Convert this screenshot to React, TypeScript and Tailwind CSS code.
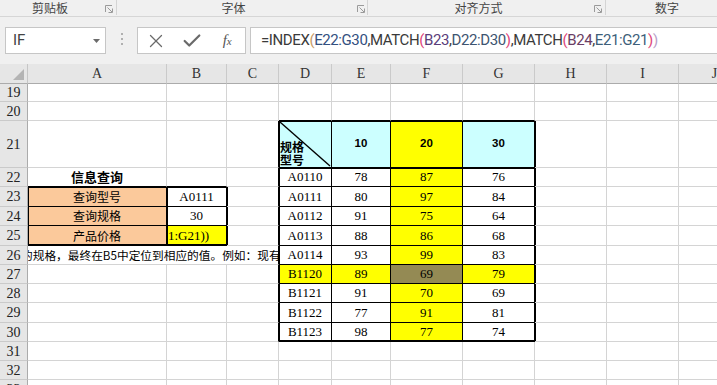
import React from 'react';
import { X, Check } from 'lucide-react';

const ROW_IDS = [19, 20, 21, 22, 23, 24, 25, 26, 27, 28, 29, 30, 31, 32, 33];
const COL_LETTERS = ['', 'A', 'B', 'C', 'D', 'E', 'F', 'G', 'H', 'I', 'J'];

const SH: Record<string, string> = {
  '': '',
  L: 'shadow-[inset_1px_0_0_#000]',
  T: 'shadow-[inset_0_1px_0_#000]',
  LT: 'shadow-[inset_1px_1px_0_#000]',
  B: 'shadow-[inset_0_-1px_0_#000]',
  LB: 'shadow-[inset_1px_-1px_0_#000]',
  TB: 'shadow-[inset_0_1px_0_#000,inset_0_-1px_0_#000]',
  LTB: 'shadow-[inset_1px_1px_0_#000,inset_0_-1px_0_#000]',
};

const RIGHT: Record<number, string[]> = {
  22: ['A0110', '78', '87', '76'],
  23: ['A0111', '80', '97', '84'],
  24: ['A0112', '91', '75', '64'],
  25: ['A0113', '88', '86', '68'],
  26: ['A0114', '93', '99', '83'],
  27: ['B1120', '89', '69', '79'],
  28: ['B1121', '91', '70', '69'],
  29: ['B1122', '77', '91', '81'],
  30: ['B1123', '98', '77', '74'],
};

const inRight = (r: number, c: number) => r >= 21 && r <= 30 && c >= 4 && c <= 7;
const inLeft = (r: number, c: number) => r >= 23 && r <= 25 && c >= 1 && c <= 2;

function thickL(r: number, c: number) {
  if ((c === 4 || c === 8) && r >= 21 && r <= 30) return true;
  if (c >= 1 && c <= 3 && r >= 23 && r <= 25) return true;
  return false;
}
function thickT(r: number, c: number) {
  if ((r === 21 || r === 22) && c >= 4 && c <= 7) return true;
  if (r === 23 && c >= 1 && c <= 2) return true;
  return false;
}
function thickB(r: number, c: number) {
  if (r === 30 && c >= 4 && c <= 7) return true;
  if (r === 25 && c >= 1 && c <= 2) return true;
  return false;
}
function blackR(r: number, c: number) {
  if (inRight(r, c) || inLeft(r, c)) return true;
  if (c === 3 && r >= 21 && r <= 30) return true;
  return false;
}
function blackB(r: number, c: number) {
  if (inRight(r, c) || inLeft(r, c)) return true;
  if (r === 20 && c >= 4 && c <= 7) return true;
  if (r === 22 && c >= 1 && c <= 2) return true;
  return false;
}

const NUM = "justify-center font-['Liberation_Serif',serif] text-[13px] text-black";
const ZH = "justify-center font-['Noto_Sans_CJK_SC',sans-serif] text-[12px] text-black";

function cellContent(r: number, c: number): { bg: string; cls: string; node: React.ReactNode } {
  let bg = 'bg-white';
  let cls = '';
  let node: React.ReactNode = null;
  if (inRight(r, c)) {
    const ci = c - 4;
    if (r === 21) {
      if (ci === 0) {
        bg = 'bg-[#ccffff]';
        cls = "flex-col !items-start justify-end pl-[1px] pb-[1px] font-['Noto_Sans_CJK_SC',sans-serif] font-bold text-[12px] leading-[13px] text-black";
        node = (
          <>
            <svg className="absolute inset-0" width="100%" height="100%" viewBox="0 0 53 47" preserveAspectRatio="none">
              <line x1="1" y1="1" x2="52" y2="46" stroke="#000" strokeWidth="1.4" />
            </svg>
            <span className="relative">规格</span>
            <span className="relative">型号</span>
          </>
        );
      } else {
        bg = ci === 2 ? 'bg-[#ffff00]' : 'bg-[#ccffff]';
        cls = "justify-center font-['Liberation_Sans',sans-serif] font-bold text-[11.5px] text-black";
        node = ['10', '20', '30'][ci - 1];
      }
    } else {
      node = RIGHT[r][ci];
      cls = NUM;
      if (ci === 2) bg = r === 27 ? 'bg-[#948a54]' : 'bg-[#ffff00]';
      else if (r === 27) bg = 'bg-[#ffff00]';
    }
  } else if (inLeft(r, c)) {
    if (c === 1) {
      bg = 'bg-[#fbc99b]';
      cls = ZH;
      node = ['查询型号', '查询规格', '产品价格'][r - 23];
    } else if (r === 25) {
      bg = 'bg-[#ffff00]';
      cls = "justify-start pl-[1px] font-['Liberation_Serif',serif] text-[13px] text-black";
      node = '1:G21))';
    } else {
      cls = NUM;
      node = r === 23 ? 'A0111' : '30';
    }
  } else if (r === 22 && c === 1) {
    cls = "justify-center font-['Noto_Sans_CJK_SC',sans-serif] font-bold text-[13px] text-black";
    node = '信息查询';
  }
  return { bg, cls, node };
}

function Launcher({ className }: { className?: string }) {
  return (
    <svg className={className} width="8" height="8" viewBox="0 0 8 8">
      <path d="M0.5 7V0.5H7" stroke="#9a9a9a" fill="none" />
      <path d="M2.5 2.5L7 7M7.5 3.5V7.5H3.5" stroke="#9a9a9a" fill="none" />
    </svg>
  );
}

function Ribbon() {
  return (
    <div className="h-[17px] bg-[#f0f0f0] border-b border-[#d6d6d6] flex text-[12px] leading-[15px] text-[#444] font-['Noto_Sans_CJK_SC',sans-serif]">
      <div className="w-[117px] shrink-0 flex items-start">
        <div className="w-[100px] text-center">剪贴板</div>
        <Launcher className="ml-[5px] mt-[5px]" />
        <div className="ml-auto h-[15px] w-px bg-[#d4d4d4]" />
      </div>
      <div className="w-[251px] shrink-0 flex items-start">
        <div className="w-[233px] text-center">字体</div>
        <Launcher className="ml-[7px] mt-[5px]" />
        <div className="ml-auto h-[15px] w-px bg-[#d4d4d4]" />
      </div>
      <div className="w-[238px] shrink-0 flex items-start">
        <div className="w-[221px] text-center">对齐方式</div>
        <Launcher className="ml-[5px] mt-[5px]" />
        <div className="ml-auto h-[15px] w-px bg-[#d4d4d4]" />
      </div>
      <div className="w-[111px] shrink-0 overflow-hidden">
        <div className="w-[122px] text-center">数字</div>
      </div>
    </div>
  );
}

function FormulaBar() {
  const p = 'text-[#e0457b]';
  const o = 'text-[#c89a66]';
  return (
    <div className="h-[47px] bg-[#f0f0f0] flex items-start pt-[10px] pl-[5px]">
      <div className="w-[101px] shrink-0 h-[27px] bg-white border border-[#c6c6c6] flex items-center pl-[7px] pr-[5px]">
        <span className="flex-1 font-['Roboto',sans-serif] text-[15px] text-[#444]">IF</span>
        <svg width="7" height="4" viewBox="0 0 7 4">
          <path d="M0 0H7L3.5 4Z" fill="#6b6b6b" />
        </svg>
      </div>
      <div className="w-[31px] shrink-0 flex flex-col items-center gap-[3px] pt-[6px]">
        <div className="w-[2px] h-[2px] bg-[#b0b0b0]" />
        <div className="w-[2px] h-[2px] bg-[#b0b0b0]" />
        <div className="w-[2px] h-[2px] bg-[#b0b0b0]" />
      </div>
      <div className="w-[109px] shrink-0 h-[27px] bg-white border border-[#c6c6c6] flex items-center">
        <div className="w-[36px] flex justify-center">
          <X size={22} strokeWidth={1.4} color="#6a6a6a" />
        </div>
        <div className="w-[36px] flex justify-center">
          <Check size={22} strokeWidth={2.4} color="#6a6a6a" />
        </div>
        <div className="w-[36px] flex justify-center">
          <span className="italic font-['Liberation_Serif',serif] text-[15px] text-[#555] leading-none">
            f<span className="text-[11px]">x</span>
          </span>
        </div>
      </div>
      <div className="ml-[4px] flex-1 h-[27px] bg-white border border-[#c6c6c6] border-r-0 flex items-center pl-[10px] whitespace-nowrap overflow-hidden">
        <span className="font-['Roboto',sans-serif] text-[15px] tracking-[-0.4px] text-[#3a3a3a]">
          =INDEX<span className={o}>(</span>
          <span className="text-[#33507f]">E22:G30</span>,MATCH<span className={p}>(</span>
          <span className="text-[#5a3d7a]">B23</span>,<span className="text-[#3d5470]">D22:D30</span>
          <span className={p}>)</span>,MATCH<span className={p}>(</span>
          <span className="text-[#6a3d64]">B24</span>,<span className="text-[#3d5f7a]">E21:G21</span>
          <span className={p}>)</span>
          <span className="text-[#b8a0c8]">)</span>
        </span>
      </div>
    </div>
  );
}

function Sheet() {
  const cells: React.ReactNode[] = [];
  COL_LETTERS.forEach((l, c) => {
    if (c === 0) {
      cells.push(
        <div key="corner" className="relative bg-[#e6e6e6] border-r border-b border-r-[#c6c6c6] border-b-[#ababab]">
          <svg className="absolute right-[3px] bottom-[3px]" width="11" height="11" viewBox="0 0 11 11">
            <path d="M11 0V11H0Z" fill="#b4b4b4" />
          </svg>
        </div>
      );
    } else {
      cells.push(
        <div
          key={'h' + c}
          className="flex items-center justify-center bg-[#e6e6e6] border-r border-b border-r-[#cacaca] border-b-[#ababab] font-['Liberation_Serif',serif] text-[14px] text-[#333] overflow-hidden"
        >
          {l}
        </div>
      );
    }
  });
  ROW_IDS.forEach((r) => {
    cells.push(
      <div
        key={'r' + r}
        className="flex items-center justify-center bg-[#e6e6e6] border-r border-b border-r-[#ababab] border-b-[#cacaca] font-['Liberation_Serif',serif] text-[14px] text-[#222]"
      >
        {r}
      </div>
    );
    for (let c = 1; c <= 10; c++) {
      if (r === 26 && c === 1) {
        cells.push(
          <div
            key="span26"
            className="col-span-3 flex items-center overflow-hidden whitespace-nowrap bg-white border-b border-r border-b-[#d4d4d4] border-r-black font-['Noto_Sans_CJK_SC',sans-serif] text-[11.7px] text-black"
          >
            <span className="-ml-[7px]">的规格，最终在B5中定位到相应的值。例如：现有规格</span>
          </div>
        );
        c = 3;
        continue;
      }
      const key = (thickL(r, c) ? 'L' : '') + (thickT(r, c) ? 'T' : '') + (thickB(r, c) ? 'B' : '');
      const { bg, cls, node } = cellContent(r, c);
      const brc = blackR(r, c) ? 'border-r-black' : 'border-r-[#d4d4d4]';
      const bbc = blackB(r, c) ? 'border-b-black' : 'border-b-[#d4d4d4]';
      cells.push(
        <div
          key={r + '-' + c}
          className={`relative flex items-center overflow-hidden whitespace-nowrap border-r border-b ${brc} ${bbc} ${bg} ${SH[key]} ${cls}`}
        >
          {node}
        </div>
      );
    }
  });
  return (
    <div className="grid grid-cols-[28px_139px_60px_52px_53px_59px_72px_72px_72px_72px_72px] grid-rows-[20px_18px_19px_47px_19px_20px_19px_20px_19px_19px_19px_20px_19px_19px_19px_19px]">
      {cells}
    </div>
  );
}

export default function App() {
  return (
    <div className="w-[717px] h-[385px] overflow-hidden bg-white relative font-['Noto_Sans_CJK_SC',sans-serif]">
      <Ribbon />
      <FormulaBar />
      <Sheet />
    </div>
  );
}
